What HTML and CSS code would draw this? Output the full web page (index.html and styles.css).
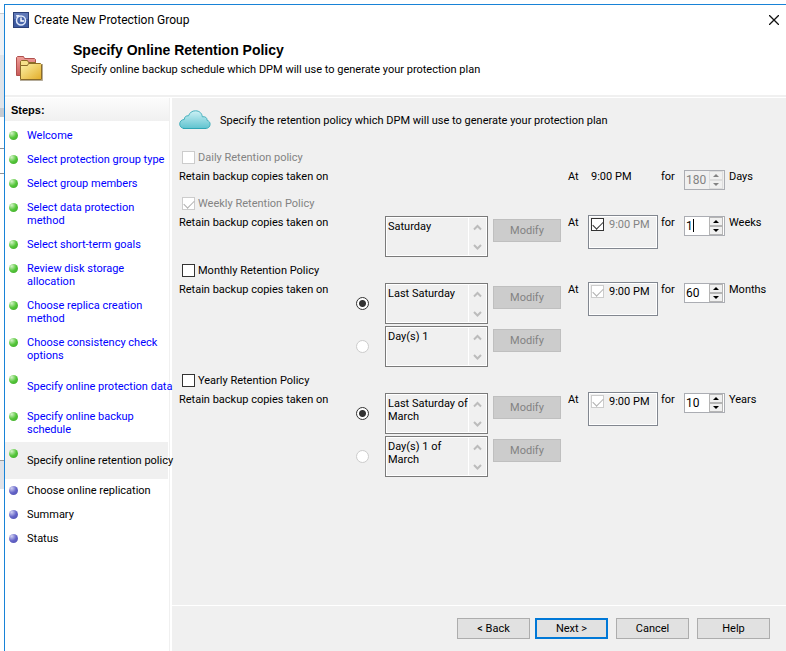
FILE: index.html
```html
<!DOCTYPE html>
<html lang="en">
<head>
<meta charset="utf-8">
<meta name="viewport" content="width=device-width, initial-scale=1">
<title>Create New Protection Group</title>
<link rel="stylesheet" href="styles.css">
</head>
<body>
<svg class="defs" width="0" height="0" aria-hidden="true">
  <defs>
    <symbol id="arrows" viewBox="0 0 17 37">
      <path d="M5 11.500 8.500 8l3.500 3.500M5 27l3.500 3.500L12 27" fill="none" stroke="#bcbcbc" stroke-width="2"/>
    </symbol>
    <symbol id="up" viewBox="0 0 12 7"><path d="M3 5h6L6 2z" fill="currentColor"/></symbol>
    <symbol id="down" viewBox="0 0 12 7"><path d="M3 2h6L6 5z" fill="currentColor"/></symbol>
  </defs>
</svg>
<div class="desktop">
  <div class="behind" aria-hidden="true">
    <span class="strip strip-toolbar"></span>
    <span class="strip strip-pane"></span>
    <span class="strip strip-bar"></span>
    <span class="strip strip-white"></span>
    <span class="strip strip-tab"></span>
    <span class="strip strip-list"></span>
    <span class="strip strip-end"></span>
  </div>
  <div class="window">
    <header class="titlebar">
      <svg class="app-icon" viewBox="0 0 16 16" aria-hidden="true">
        <rect x=".5" y=".5" width="15" height="15" fill="#3d5aa0" stroke="#2c4078"/>
        <rect x="1" y="1" width="14" height="6" fill="#6079b8"/>
        <circle cx="8" cy="8.500" r="4.500" fill="#4966ad" stroke="#dfe8fa" stroke-width="1.500"/>
        <path d="M8 5.500V9h3" fill="none" stroke="#fff" stroke-width="1.400"/>
        <path d="M3 3h4L4 6z" fill="#e9effc"/>
      </svg>
      <span class="title">Create New Protection Group</span>
      <button class="close" type="button" aria-label="Close">
        <svg viewBox="0 0 10 10" width="10" height="10"><path d="M0 0l10 10M10 0L0 10" stroke="#111" stroke-width="1.300"/></svg>
      </button>
    </header>
    <div class="banner">
      <svg class="folders" viewBox="0 0 28 26" aria-hidden="true">
        <defs>
          <linearGradient id="gold" x1="0" y1="0" x2="1" y2="1"><stop offset="0" stop-color="#fdf3a8"/><stop offset="1" stop-color="#e2ac28"/></linearGradient>
          <linearGradient id="red" x1="0" y1="0" x2="0" y2="1"><stop offset="0" stop-color="#f0a09a"/><stop offset="1" stop-color="#c85a58"/></linearGradient>
        </defs>
        <path d="M1.500 20.500V2.500l1-1h6l1 2h10l1 1v16z" fill="url(#red)" stroke="#b0504e"/>
        <path d="M5.500 24V6.500l1-1h6l1 2h7v4" fill="#f7e28a" stroke="#8c6c28"/>
        <path d="M5.500 24.500V10.500h7l1-2h12l1 1v15z" fill="url(#gold)" stroke="#8c6c28"/>
        <path d="M5 25.500h22.500V9" fill="none" stroke="#6b5a35" stroke-opacity=".5"/>
      </svg>
      <div class="banner-text">
        <h1>Specify Online Retention Policy</h1>
        <p>Specify online backup schedule which DPM will use to generate your protection plan</p>
      </div>
    </div>
    <div class="body">
      <nav class="steps">
        <h2>Steps:</h2>
        <ol>
          <li><a href="#">Welcome</a></li>
          <li><a href="#">Select protection group type</a></li>
          <li><a href="#">Select group members</a></li>
          <li><a href="#">Select data protection method</a></li>
          <li><a href="#">Select short-term goals</a></li>
          <li><a href="#">Review disk storage allocation</a></li>
          <li><a href="#">Choose replica creation method</a></li>
          <li><a href="#">Choose consistency check options</a></li>
          <li class="tall"><a href="#">Specify online protection data</a></li>
          <li><a href="#">Specify online backup schedule</a></li>
          <li class="tall current" aria-current="step"><span>Specify online retention policy</span></li>
          <li class="todo"><span>Choose online replication</span></li>
          <li class="todo"><span>Summary</span></li>
          <li class="todo"><span>Status</span></li>
        </ol>
      </nav>
      <main class="panel">
        <div class="intro">
          <svg class="cloud" viewBox="0 0 32 20" aria-hidden="true">
            <defs><linearGradient id="sky" x1="0" y1="0" x2="0" y2="1"><stop offset="0" stop-color="#cdf1f5"/><stop offset="1" stop-color="#5fc3cf"/></linearGradient></defs>
            <path d="M6 18.500C2.500 18.500.7 16.500.7 14c0-2.600 2-4.500 4.600-4.500C5.300 7 7 5.500 9.500 5.800 10.800 2.500 13 .8 16.500.8c4 0 6.500 2.500 6.800 6 3-.6 4.900 1 4.800 3.600 2 .5 3 2 3 3.800 0 2.600-1.900 4.300-4.600 4.300z" fill="url(#sky)" stroke="#46b0bd"/>
            <path d="M4 18.500h23" stroke="#2fa6b5"/>
          </svg>
          <p>Specify the retention policy which DPM will use to generate your protection plan</p>
        </div>

        <section class="policy">
          <label class="check"><input type="checkbox" disabled>Daily Retention policy</label>
          <div class="row">
            <span class="caption">Retain backup copies taken on</span>
            <span class="at">At</span>
            <span class="time-text">9:00 PM</span>
            <label class="for" for="days">for</label>
            <div class="spin off"><input id="days" type="text" value="180" disabled><button type="button" disabled aria-label="More days"><svg><use href="#up"/></svg></button><button type="button" disabled aria-label="Fewer days"><svg><use href="#down"/></svg></button></div>
            <span class="unit">Days</span>
          </div>
        </section>

        <section class="policy">
          <label class="check"><input type="checkbox" checked disabled>Weekly Retention Policy</label>
          <div class="row">
            <span class="caption">Retain backup copies taken on</span>
            <div class="list"><textarea readonly aria-label="Weekly backup days">Saturday</textarea><svg><use href="#arrows"/></svg></div>
            <button class="modify" type="button" disabled>Modify</button>
            <span class="at">At</span>
            <div class="times"><label class="dim"><input type="checkbox" checked>9:00 PM</label></div>
            <label class="for" for="weeks">for</label>
            <div class="spin editing"><input id="weeks" type="text" value="1"><button type="button" aria-label="More weeks"><svg><use href="#up"/></svg></button><button type="button" aria-label="Fewer weeks"><svg><use href="#down"/></svg></button></div>
            <span class="unit">Weeks</span>
          </div>
        </section>

        <section class="policy">
          <label class="check"><input type="checkbox">Monthly Retention Policy</label>
          <div class="row">
            <span class="caption">Retain backup copies taken on</span>
            <input class="radio" type="radio" name="month" checked aria-label="By weekday of the month">
            <div class="list"><textarea readonly aria-label="Monthly weekday">Last Saturday</textarea><svg><use href="#arrows"/></svg></div>
            <button class="modify" type="button" disabled>Modify</button>
            <span class="at">At</span>
            <div class="times"><label><input type="checkbox" checked disabled>9:00 PM</label></div>
            <label class="for" for="months">for</label>
            <div class="spin"><input id="months" type="text" value="60"><button type="button" aria-label="More months"><svg><use href="#up"/></svg></button><button type="button" aria-label="Fewer months"><svg><use href="#down"/></svg></button></div>
            <span class="unit">Months</span>
            <input class="radio" type="radio" name="month" disabled aria-label="By day of the month">
            <div class="list"><textarea readonly aria-label="Monthly day">Day(s) 1</textarea><svg><use href="#arrows"/></svg></div>
            <button class="modify" type="button" disabled>Modify</button>
          </div>
        </section>

        <section class="policy">
          <label class="check"><input type="checkbox">Yearly Retention Policy</label>
          <div class="row">
            <span class="caption">Retain backup copies taken on</span>
            <input class="radio" type="radio" name="year" checked aria-label="By weekday of the year">
            <div class="list"><textarea readonly aria-label="Yearly weekday">Last Saturday of March</textarea><svg><use href="#arrows"/></svg></div>
            <button class="modify" type="button" disabled>Modify</button>
            <span class="at">At</span>
            <div class="times"><label><input type="checkbox" checked disabled>9:00 PM</label></div>
            <label class="for" for="years">for</label>
            <div class="spin"><input id="years" type="text" value="10"><button type="button" aria-label="More years"><svg><use href="#up"/></svg></button><button type="button" aria-label="Fewer years"><svg><use href="#down"/></svg></button></div>
            <span class="unit">Years</span>
            <input class="radio" type="radio" name="year" disabled aria-label="By day of the year">
            <div class="list"><textarea readonly aria-label="Yearly day">Day(s) 1 of March</textarea><svg><use href="#arrows"/></svg></div>
            <button class="modify" type="button" disabled>Modify</button>
          </div>
        </section>

        <footer class="actions">
          <button type="button">&lt; Back</button>
          <button type="button" class="primary">Next &gt;</button>
          <button type="button" class="apart">Cancel</button>
          <button type="button" class="apart">Help</button>
        </footer>
      </main>
    </div>
  </div>
</div>
</body>
</html>
```
FILE: styles.css
```css
* { box-sizing: border-box; }

body {
  margin: 0;
  background: #fff;
  color: #000;
  font: 11px/13px Roboto, "Liberation Sans", Arial, sans-serif;
}

h1, h2, p, ol { margin: 0; padding: 0; }
button, input, textarea { font: inherit; color: inherit; margin: 0; }
.defs { position: absolute; }

.desktop { display: flex; min-height: 100vh; padding-top: 4px; }

/* Sliver of the console behind the wizard */
.behind { width: 4px; display: flex; flex-direction: column; background: #fff; }
.strip { display: block; }
.strip-toolbar { height: 9px; }
.strip-pane { height: 42px; background: #eef1f5; border-top: 1px solid #c8ccd2; }
.strip-bar { height: 62px; background: #dfe4ea; border-bottom: 9px solid #c5cad1; }
.strip-white { height: 31px; }
.strip-tab { height: 26px; background: #fff; border: solid #8d9299; border-width: 1px 0; }
.strip-list { height: 287px; border-bottom: 1px solid #9a9a9a; }
.strip-end { height: 28px; background: #dfe2e8; }

.window {
  flex: 1;
  min-width: 0;
  display: flex;
  flex-direction: column;
  border: solid #1883d7;
  border-width: 1px 0 0 1px;
}

.titlebar { display: flex; align-items: center; height: 29px; padding: 0 7px 0 8px; }
.app-icon { width: 16px; height: 16px; }
.title { flex: 1; margin-left: 5px; font-size: 12px; line-height: 16px; }
.close { display: flex; padding: 0; border: 0; background: none; }

.banner { display: flex; height: 63px; padding-left: 10px; border-bottom: 2px solid #f0f0f0; }
.folders { width: 28px; height: 26px; margin-top: 21px; }
.banner-text { padding: 8px 0 0 28px; }
.banner h1 { padding-left: 2px; font: bold 14px/16px "Liberation Sans", Arial, sans-serif; }
.banner p { margin-top: 5px; }

.body { flex: 1; display: flex; gap: 2px; padding-top: 1px; }

.steps { width: 165px; flex: none; border-right: 1px solid #f0f0f0; position: relative; z-index: 1; }
.steps h2 {
  padding: 6px 6px 4px;
  margin-bottom: 3px;
  font: bold 11px/13px "Liberation Sans", Arial, sans-serif;
  background: linear-gradient(#fcfcfc, #f0f0f0);
}
.steps ol { list-style: none; }
.steps li { display: flex; align-items: center; min-height: 24px; padding: 5px 0 6px 4px; }
.steps li::before {
  content: "";
  align-self: flex-start;
  flex: none;
  width: 9px;
  height: 9px;
  margin: 2px 9px 0 0;
  border-radius: 50%;
  background: radial-gradient(circle at 30% 25%, #d5f3c8, #55c63a 50%, #3da52a);
}
.steps li.todo::before { background: radial-gradient(circle at 30% 25%, #d0d0f2, #6464c8 50%, #4f4fae); }
.steps li.tall { min-height: 37px; white-space: nowrap; }
.steps li.current { background: #f0f0f0; margin-right: 1px; }
.steps a { color: #00f; text-decoration: none; }

.panel { flex: 1; min-width: 0; display: flex; flex-direction: column; background: #f0f0f0; }
.intro { display: flex; align-items: center; gap: 9px; height: 44px; margin-bottom: 5px; padding-left: 7px; }
.cloud { width: 32px; height: 20px; }

.check { display: flex; align-items: center; gap: 3px; height: 20px; margin-left: 10px; }
.check:has(:disabled), .dim { color: #838383; }

input[type="checkbox"] {
  appearance: none;
  flex: none;
  width: 13px;
  height: 13px;
  border: 1px solid #333;
  background: #fff;
}
input[type="checkbox"]:disabled { border-color: #ccc; }
input[type="checkbox"]:checked::before {
  content: "";
  display: block;
  width: 9px;
  height: 5px;
  margin: 2px 1px;
  border: solid #333;
  border-width: 0 0 1px 1px;
  transform: rotate(-45deg);
}
input[type="checkbox"]:checked:disabled::before { border-color: #b0b0b0; }

.row {
  display: grid;
  grid-template-columns: 177px 29px 103px 5px 68px 7px 20px 70px 3px 23px 41px 4px auto;
  row-gap: 2px;
  align-items: start;
  justify-content: start;
  padding: 3px 0 3px 7px;
}
.caption { grid-column: 1; }
.radio { grid-column: 2; }
.list { grid-column: 3; }
.modify { grid-column: 5; }
.at { grid-column: 7; }
.times, .time-text { grid-column: 8; }
.for { grid-column: 10; }
.spin { grid-column: 11; }
.unit { grid-column: 13; }
.time-text { padding-left: 3px; }

.radio {
  appearance: none;
  width: 13px;
  height: 13px;
  align-self: center;
  border: 1px solid #333;
  border-radius: 50%;
  background: #fff;
}
.radio:checked { background: radial-gradient(circle, #333 3px, #fff 4px); }
.radio:disabled { border-color: #ccc; }

.list { display: flex; height: 41px; padding: 1px; border: 1px solid #7a7a7a; background: #fff; }
.list textarea {
  flex: 1;
  min-width: 0;
  padding: 2px 0 2px 1px;
  border: 0;
  resize: none;
  overflow: hidden;
  background: #f0f0f0;
}
.list svg { width: 17px; height: 37px; margin-left: 1px; background: #f0f0f0; }

.modify { height: 23px; margin-top: 3px; padding: 0; border: 1px solid #bfbfbf; background: #ccc; color: #838383; }

.times { height: 34px; margin-top: -1px; padding: 2px; border: 1px solid #828790; background: #f0f0f0; box-shadow: inset 0 0 0 1px #fff; }
.times label { display: flex; gap: 5px; }

.spin {
  display: grid;
  grid-template: 9px 9px / 1fr 14px;
  height: 20px;
  padding-right: 1px;
  border: 1px solid #abadb3;
  background: #fff;
}
.spin input { grid-row: 1 / 3; min-width: 0; width: 100%; padding: 0 1px; border: 0; background: none; font-size: 12px; }
.spin button { display: flex; padding: 0; border: 1px solid #b5b5b5; background: #f0f0f0; }
.spin svg { width: 12px; height: 7px; }
.spin.off { background: #f0f0f0; color: #838383; }
.spin.off button { border-color: #ddd; }

/* Text caret of the field being edited */
.spin.editing { background: linear-gradient(#000, #000) 8px 2px / 1px 13px no-repeat #fff; }

.actions {
  display: flex;
  justify-content: flex-end;
  gap: 5px;
  height: 46px;
  margin-top: auto;
  padding: 12px 16px 0;
  border-top: 1px solid #fff;
}
.actions button { width: 73px; height: 21px; padding: 0; border: 1px solid #adadad; background: #e1e1e1; }
.actions .primary { border: 2px solid #0078d7; }
.actions .apart { margin-left: 3px; }
```
